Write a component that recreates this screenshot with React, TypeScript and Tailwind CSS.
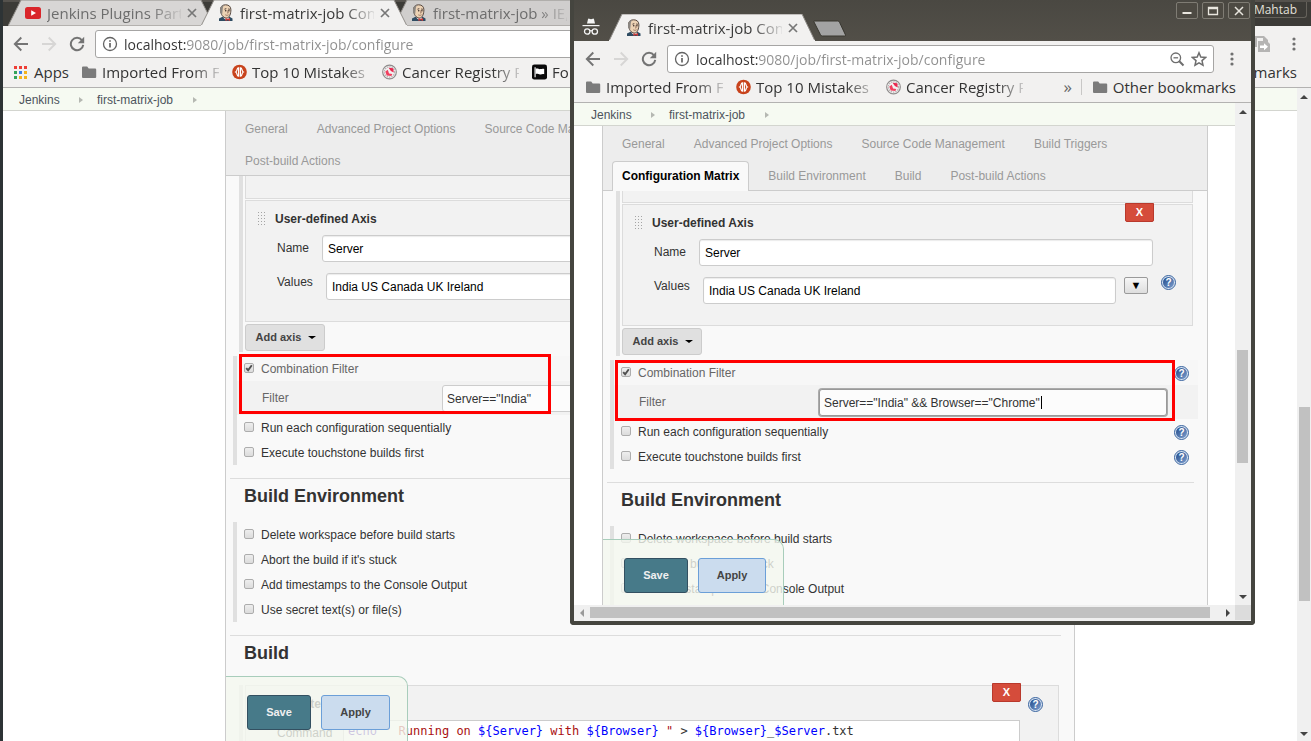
import React, { useId } from "react";

type IconProps = { className?: string };

function Butler() {
  return (
    <svg viewBox="0 0 16 18" className="h-[18px] w-4 shrink-0" aria-hidden="true">
      <path d="M1 17v-2.500l3.500-1.700h7l3 1.700V17z" fill="#2f4c62" />
      <path d="M5 12h5l1 2.500-2.500 1.500L6 14.500z" fill="#f4f1ee" />
      <path d="M2.500 6C2.300 2.500 4.500.8 7.700.8s5.200 1.900 5.200 5c0 3.800-1.400 8.200-4.400 8.200C5 14 2.800 10.500 2.500 6z" fill="#ecd2b4" stroke="#54463f" strokeWidth="1" />
      <path d="M2.300 9C1.300 4.500 2.800 1 6.500.8 4.800 2.200 4.800 4 4.600 6.500L4.200 10z" fill="#8b8681" />
      <path d="M6.500 5.200l1.800-.5M10.200 5l1.600.3" stroke="#4c3b34" strokeWidth="1" />
      <circle cx="7.700" cy="6.700" r=".8" fill="#3a2d28" />
      <circle cx="10.900" cy="6.700" r=".8" fill="#3a2d28" />
      <path d="M9.600 6.500l.6 2.300-1.200.2M7.300 10.800c1.100.7 2.200.7 3.300 0" stroke="#8b6754" strokeWidth=".8" fill="none" />
      <path d="M7.500 14l2.300 1.100L12 14v3l-2.200-1L7.500 17z" fill="#cf3a38" />
    </svg>
  );
}

function YouTube() {
  return (
    <svg viewBox="0 0 16 12" className="h-3 w-4 shrink-0" aria-hidden="true">
      <rect width="16" height="12" rx="2.500" fill="#d9252a" />
      <path d="M6.200 3.200v5.600L11 6z" fill="#fff" />
    </svg>
  );
}

function Folder() {
  return (
    <svg viewBox="0 0 15 13" className="h-[13px] w-[15px] shrink-0" aria-hidden="true">
      <path d="M0 1.500Q0 .5 1 .5h4.200L6.700 2.500H13.200q1 0 1 1V11q0 1-1 1H1q-1 0-1-1z" fill="#7b7b7b" />
    </svg>
  );
}

function AppsGrid() {
  const colors = ["#ee3e36", "#ee3e36", "#ee3e36", "#34a25a", "#3a7fe8", "#f4b31c", "#34a25a", "#f4b31c", "#f4b31c"];
  return (
    <svg viewBox="0 0 13 13" className="h-[13px] w-[13px] shrink-0" aria-hidden="true">
      {colors.map((c, i) => (
        <rect key={i} x={(i % 3) * 5} y={Math.floor(i / 3) * 5} width="3" height="3" fill={c} />
      ))}
    </svg>
  );
}

function Braces() {
  return (
    <svg viewBox="0 0 16 16" className="h-4 w-[15px] shrink-0" aria-hidden="true">
      <circle cx="8" cy="8" r="7.800" fill="#c8431c" />
      <path d="M7 3.600C4.800 3.400 6 7 4 8c2 1 .8 4.600 3 4.400zM9 3.600c2.200-.2 1 3.400 3 4.400-2 1-.8 4.600-3 4.400z" stroke="#fff" strokeWidth="1.300" fill="none" />
    </svg>
  );
}

function Registry() {
  return (
    <svg viewBox="0 0 16 16" className="h-4 w-[15px] shrink-0" aria-hidden="true">
      <circle cx="8" cy="8" r="7.300" fill="#f3f1f1" stroke="#8e8b8b" strokeWidth="1.200" />
      <circle cx="8" cy="8" r="5.500" fill="none" stroke="#b9b4b4" strokeWidth="1.400" strokeDasharray="1.500 1" />
      <path d="M7 3.500l5 .5.5 4.500L9.500 7z" fill="#e9274e" />
      <path d="M3.500 7.500L6.200 5.500l1.300 4L11 10l-1 2.200-5-.5z" fill="#f0405f" />
    </svg>
  );
}

function Flag() {
  return (
    <svg viewBox="0 0 16 16" className="h-4 w-[15px] shrink-0" aria-hidden="true">
      <rect width="16" height="16" rx="2.500" fill="#0a0a0a" />
      <path d="M3.300 3v10.500" stroke="#fff" strokeWidth="1.200" />
      <path d="M4 4.500c2-1 3.200.8 5 .4 1.500-.3 2.500-.8 4-.2v5.600c-1.500-.6-2.600 0-4 .3-1.800.3-3-1.300-5-.4z" fill="#fff" />
    </svg>
  );
}

function Incognito() {
  return (
    <svg viewBox="0 0 18 18" className="h-[18px] w-[18px]" aria-hidden="true">
      <path d="M5 5.500L6 1.200Q6.300.4 7.200.7L9 1.200l1.800-.5q.9-.3 1.200.5l1 4.300z" fill="#f4f4f4" />
      <path d="M.5 7h17v1.200H.5z" fill="#f4f4f4" />
      <circle cx="5.200" cy="13.500" r="2.700" fill="none" stroke="#f4f4f4" strokeWidth="1.300" />
      <circle cx="12.800" cy="13.500" r="2.700" fill="none" stroke="#f4f4f4" strokeWidth="1.300" />
      <path d="M7.800 13q1.200-.8 2.400 0" fill="none" stroke="#f4f4f4" strokeWidth="1.100" />
    </svg>
  );
}

function Arrow({ className = "" }: IconProps) {
  return (
    <svg viewBox="0 0 16 16" className={"h-4 w-4 " + className} fill="none" stroke="currentColor" strokeWidth="1.900" aria-hidden="true">
      <path d="M15 8H2M8.300 1.500L1.800 8l6.500 6.500" />
    </svg>
  );
}

function Reload() {
  return (
    <svg viewBox="0 0 16 16" className="h-4 w-4" fill="none" stroke="#747474" strokeWidth="2" aria-hidden="true">
      <path d="M13 4.300A6.200 6.200 0 1 0 14.200 8.800" />
      <path d="M15.200.8v6.400H8.800z" fill="#747474" stroke="none" />
    </svg>
  );
}

function Dots() {
  return (
    <svg viewBox="0 0 16 16" className="h-4 w-4" fill="#707070" aria-hidden="true">
      <circle cx="8" cy="3" r="1.600" />
      <circle cx="8" cy="8" r="1.600" />
      <circle cx="8" cy="13" r="1.600" />
    </svg>
  );
}

const UI = "font-['Open_Sans','Noto_Sans',sans-serif]";

function Tab({ title, active, icon, fill }: { title: string; active?: boolean; icon: React.ReactNode; fill: string }) {
  return (
    <div className={"relative -mr-[13px] flex h-full w-[206px] shrink-0 items-center gap-[6px] pl-[17px] " + (active ? "z-10" : "")}>
      <svg viewBox="0 0 206 27" preserveAspectRatio="none" className="absolute inset-0 h-full w-full" aria-hidden="true">
        <path d="M0 27L13 0H193L206 27z" fill={fill} stroke="#8f8c88" strokeWidth="1" />
        {active && <path d="M0 27h206" stroke={fill} strokeWidth="2" />}
      </svg>
      <div className="relative flex">{icon}</div>
      <span className={"relative w-[134px] overflow-hidden whitespace-nowrap text-[15px] leading-5 [mask-image:linear-gradient(90deg,#000_104px,transparent_138px)] " + (active ? "text-[#3b3b3b]" : "text-[#6d6d6d]")}>
        {title}
      </span>
      <button aria-label="Close tab" className="relative">
        <svg viewBox="0 0 10 10" className="h-[10px] w-[10px]" stroke="#777" strokeWidth="1.700" aria-hidden="true">
          <path d="M1 1l8 8M9 1L1 9" />
        </svg>
      </button>
    </div>
  );
}

function Toolbar({ front }: { front?: boolean }) {
  return (
    <div className={"flex h-9 items-center bg-[#f2f1f0] " + (front ? "pl-[11px] pr-[11px]" : "pl-[10px] pr-[9px]")}>
      <div className="flex shrink-0 items-center gap-3">
        <button aria-label="Back"><Arrow className="text-[#747474]" /></button>
        <button aria-label="Forward"><Arrow className="rotate-180 text-[#d7d6d5]" /></button>
        <button aria-label="Reload"><Reload /></button>
      </div>
      <div className="ml-[10px] flex h-7 min-w-0 flex-1 items-center rounded-[3px] border border-[#a6a5a4] bg-white pl-[6px] pr-[6px]">
        <svg viewBox="0 0 16 16" className="h-4 w-4 shrink-0" fill="none" stroke="#636363" strokeWidth="1.300" aria-label="Site information">
          <circle cx="8" cy="8" r="6.500" />
          <path d="M8 7v4.500M8 4.200v1.600" strokeWidth="1.700" />
        </svg>
        <input
          aria-label="Address"
          defaultValue="localhost:9080/job/first-matrix-job/configure"
          className="ml-[6px] h-6 min-w-0 flex-1 bg-[linear-gradient(90deg,#333_62px,#8f8f8f_62px)] bg-clip-text text-[14px] text-transparent outline-none"
        />
        {front && (
          <div className="flex items-center gap-[6px]">
            <button aria-label="Zoom">
              <svg viewBox="0 0 16 16" className="h-4 w-4" fill="none" stroke="#6e6e6e" strokeWidth="1.300" aria-hidden="true">
                <circle cx="6.800" cy="6.800" r="4.800" />
                <path d="M4.500 6.800h4.600" />
                <path d="M10.300 10.300l4.200 4.200" strokeWidth="2" />
              </svg>
            </button>
            <button aria-label="Bookmark this page">
              <svg viewBox="0 0 16 16" className="h-4 w-4" fill="none" stroke="#6e6e6e" strokeWidth="1.500" aria-hidden="true">
                <path d="M8 1.800l1.800 4.300 4.700.4-3.500 3.100 1 4.600L8 11.800l-4 2.400 1-4.600L1.500 6.500l4.700-.4z" />
              </svg>
            </button>
          </div>
        )}
      </div>
      {!front && (
        <button aria-label="Extension" className="ml-[10px]">
          <svg viewBox="0 0 16 16" className="h-4 w-4" aria-hidden="true">
            <path d="M1 0h9l4 4v3h-2V5H9V2H3v9H1z" fill="#b5b4b3" />
            <path d="M4 5h9l3 3v8H4z" fill="#b5b4b3" />
            <path d="M6 9.500h4V7.300l4 3.500-4 3.500V12H6z" fill="#fff" />
          </svg>
        </button>
      )}
      <button aria-label="Menu" className={front ? "ml-[10px]" : "ml-4"}><Dots /></button>
    </div>
  );
}

function Bookmark({ icon, label }: { icon: React.ReactNode; label: string }) {
  return (
    <a href="#" className="flex shrink-0 items-center gap-[5px]">
      {icon}
      <span className="w-[117px] overflow-hidden whitespace-nowrap [mask-image:linear-gradient(90deg,#000_90px,transparent_124px)]">{label}</span>
    </a>
  );
}

function Bookmarks({ front }: { front?: boolean }) {
  return (
    <nav className={"flex h-[26px] items-center justify-between border-b border-[#b3b2b1] bg-[#f2f1f0] pb-[5px] text-[15px] leading-5 text-[#333] " + (front ? "pl-3 pr-[15px]" : "pl-[11px] pr-[14px]")}>
      <div className="flex items-center gap-[13px]">
        {!front && (
          <a href="#" className="flex items-center gap-[7px]"><AppsGrid />Apps</a>
        )}
        <Bookmark icon={<Folder />} label="Imported From Firefox" />
        <Bookmark icon={<Braces />} label="Top 10 Mistakes New" />
        <Bookmark icon={<Registry />} label="Cancer Registry Portal" />
        {!front && <Bookmark icon={<Flag />} label="Forms" />}
      </div>
      <div className="flex shrink-0 items-center">
        {front && (
          <>
            <button aria-label="More bookmarks" className="text-[17px] text-[#666]">»</button>
            <span className="ml-[9px] mr-[11px] h-4 w-px bg-[#c8c7c6]" />
          </>
        )}
        <a href="#" className="flex items-center gap-[5px]"><Folder />Other bookmarks</a>
      </div>
    </nav>
  );
}

function Breadcrumbs({ front }: { front?: boolean }) {
  const sep = <span className="h-0 w-0 border-y-[3px] border-l-4 border-y-transparent border-l-[#b5b8b2]" />;
  return (
    <nav className={"flex h-[23px] items-center border-b border-[#d3d5cf] bg-[#f6faf2] pt-px text-[12px] text-[#4d545d] " + (front ? "pl-[17px]" : "pl-4")}>
      <a href="#" className="w-[60px]">Jenkins</a>
      {sep}
      <a href="#" className="ml-[14px] w-24">first-matrix-job</a>
      {sep}
    </nav>
  );
}

function Help() {
  return (
    <button aria-label="Help" className="flex h-[15px] w-[15px] shrink-0 items-center justify-center rounded-full border border-[#3a649f] bg-[#d5e2f1] p-px">
      <span className="flex h-[11px] w-[11px] items-center justify-center rounded-full bg-linear-to-br from-[#1f4a8a] to-[#7f9fce] text-[10px] font-bold leading-[11px] text-white">?</span>
    </button>
  );
}

function CheckRow({ label, help, checked }: { label: string; help?: boolean; checked?: boolean }) {
  const id = useId();
  return (
    <div className={"flex h-[25px] items-start pl-[7px] pr-[9px] " + (checked ? "bg-[#f7f7f7] text-[#666]" : "text-[#333]")}>
      <span className="relative mt-[7px] flex h-[10px] w-[10px]">
        <input id={id} type="checkbox" defaultChecked={checked} className="h-[10px] w-[10px] appearance-none rounded-[2px] border border-[#adadad] bg-linear-to-b from-[#eee] to-[#dcdcdc]" />
        {checked && (
          <svg viewBox="0 0 10 10" className="pointer-events-none absolute inset-0" fill="none" stroke="#4f4f4f" strokeWidth="1.900" aria-hidden="true">
            <path d="M2.200 5.200l1.900 2L7.800 2.200" />
          </svg>
        )}
      </span>
      <label htmlFor={id} className="ml-[7px] flex-1 pt-[6px]">{label}</label>
      {help && <div className="pt-[6px]"><Help /></div>}
    </div>
  );
}

function Grip() {
  return <span className="h-4 w-[10px] bg-[radial-gradient(#a5a5a5_1px,transparent_1px)] bg-[size:3px_3px]" />;
}

function DeleteButton({ className }: { className: string }) {
  return (
    <button aria-label="Delete" className={"absolute h-[19px] w-[29px] rounded-b-[2px] border border-[#b9392c] bg-[#d54c3b] text-[11px] font-bold leading-[17px] text-white " + className}>
      X
    </button>
  );
}

const FIELD = "h-[27px] min-w-0 rounded-[3px] border border-[#ccc] bg-white pl-[5px] text-[12px] text-black shadow-[inset_0_1px_1px_rgba(0,0,0,0.08)] outline-none";

function ConfigTabs({ active }: { active?: string }) {
  const tabs = ["General", "Advanced Project Options", "Source Code Management", "Build Triggers", "Configuration Matrix", "Build Environment", "Build", "Post-build Actions"];
  return (
    <div role="tablist" className="flex shrink-0 flex-wrap gap-x-[9px] gap-y-[2px] border-b border-[#ccc] bg-[#ededed] pl-[9px] pt-[2px]">
      {tabs.map((t) =>
        t === active ? (
          <button key={t} role="tab" aria-selected className="-mb-px mt-px h-[30px] rounded-t-[4px] border border-b-0 border-[#ccc] bg-[#f9f9f9] px-[9px] font-bold text-black">{t}</button>
        ) : (
          <button key={t} role="tab" className="h-[30px] px-[10px] pt-[2px] text-[#999]">{t}</button>
        )
      )}
    </div>
  );
}

function SectionTitle({ children }: { children: React.ReactNode }) {
  return <h2 className="ml-[4px] mr-[13px] mt-[13px] border-t border-[#ddd] pl-[14px] pt-[5px] text-[18px] font-bold leading-6 text-[#333]">{children}</h2>;
}

function MatrixForm({ front }: { front?: boolean }) {
  const id = useId();
  return (
    <div className="relative mx-auto flex w-full flex-1 flex-col overflow-hidden border-x border-[#ccc] bg-[#f9f9f9] text-[12px] leading-[15px] text-[#333]">
      <ConfigTabs active={front ? "Configuration Matrix" : undefined} />

      <section className="ml-[13px] mr-[14px] shrink-0 border-l-4 border-[#e0e0e0] pb-px pl-[2px]">
        <div className={"mb-px border border-t-0 border-[#dcdcdc] bg-[#f2f2f2] " + (front ? "h-3" : "h-[23px]")} />
        <div className="relative h-[122px] border border-[#dcdcdc] bg-[#f2f2f2] pl-[11px] pt-[10px]">
          <DeleteButton className="-top-[2px] right-[38px]" />
          <div className="flex h-4 items-center gap-[8px] font-bold"><Grip />User-defined Axis</div>
          <div className="mt-[8px] flex pl-[20px]">
            <label htmlFor={id + "name"} className="w-[45px] pt-[6px]">Name</label>
            <input id={id + "name"} defaultValue="Server" className={FIELD + " mr-[39px] flex-1"} />
          </div>
          <div className="mt-[11px] flex pl-[20px]">
            <label htmlFor={id + "values"} className="w-[49px] pt-[2px]">Values</label>
            <input id={id + "values"} defaultValue="India US Canada UK Ireland" className={FIELD + " flex-1"} />
            <button aria-label="Expand" className="ml-[8px] flex h-[17px] w-6 items-center justify-center rounded-[2px] border border-[#9a9a9a] bg-linear-to-b from-[#f6f6f6] to-[#dedede] text-[11px] text-black">▼</button>
            <div className="-mt-[2px] ml-[13px] mr-[16px]"><Help /></div>
          </div>
        </div>
        <button className="mt-[2px] flex h-[27px] w-20 items-center justify-center gap-[7px] rounded-[3px] border border-[#ccc] bg-[#e0e0e0] pl-[2px] text-[11px] font-bold text-[#444]">
          Add axis
          <span className="h-0 w-0 border-x-4 border-t-[3px] border-x-transparent border-t-black" />
        </button>
      </section>

      <section className="relative ml-[7px] mr-[9px] mt-1 shrink-0 border-l-4 border-[#e0e0e0]">
        <CheckRow label="Combination Filter" checked help />
        <div className="relative flex h-[34px] items-start bg-[#f2f2f2] pl-[25px] pr-[31px] pt-1 text-[#666]">
          <label htmlFor={id + "filter"} className="w-[180px] pt-[6px]">Filter</label>
          <input
            id={id + "filter"}
            defaultValue={front ? 'Server=="India" && Browser=="Chrome"' : 'Server=="India"'}
            className={"h-[27px] min-w-0 flex-1 rounded-[3px] border bg-[#fcfcfc] pl-[4px] text-[12px] text-[#333] outline-none " + (front ? "border-[#999] shadow-[0_0_0_1px_#aaa]" : "border-[#ccc]")}
          />
          {front && <span className="absolute left-[427px] top-[11px] h-[13px] w-px bg-black" />}
        </div>
        <CheckRow label="Run each configuration sequentially" help />
        <CheckRow label="Execute touchstone builds first" help />
        <div className={"pointer-events-none absolute border-[3px] border-[#ff0000] " + (front ? "left-[1px] right-[23px] top-0 h-[61px]" : "-top-[2px] left-[2px] h-[60px] w-[312px]")} />
      </section>

      <SectionTitle>Build Environment</SectionTitle>
      <section className="ml-[7px] mr-[9px] mt-[14px] shrink-0 border-l-4 border-[#e0e0e0]">
        <CheckRow label="Delete workspace before build starts" />
        <CheckRow label="Abort the build if it's stuck" />
        <CheckRow label="Add timestamps to the Console Output" />
        <CheckRow label="Use secret text(s) or file(s)" />
      </section>

      {!front && (
        <>
          <SectionTitle>Build</SectionTitle>
          <section className="ml-[13px] mr-[15px] mt-[20px] shrink-0 border-l-4 border-[#e0e0e0] pl-[2px]">
            <div className="relative h-[122px] border border-[#dcdcdc] bg-[#f2f2f2] pl-[11px] pt-[10px]">
              <DeleteButton className="-top-[3px] right-[37px]" />
              <div className="flex h-4 items-center gap-[8px] font-bold">
                <Grip />
                <span className="flex-1">Execute shell</span>
                <div className="mr-[15px]"><Help /></div>
              </div>
              <div className="mt-[8px] flex pl-[20px]">
                <span className="w-[66px] pt-[6px]">Command</span>
                <pre className="mr-[38px] h-20 flex-1 border border-[#ccc] bg-white pl-[4px] pt-[3px] font-['DejaVu_Sans_Mono',monospace] text-[12px] leading-[14px] text-[#333]">
                  <code className="font-['DejaVu_Sans_Mono',monospace]">
                    <span className="text-[#3300aa]">echo</span>{" "}
                    <span className="text-[#aa1111]">{'" Running on '}</span>
                    <span className="text-[#0000ff]">{"${Server}"}</span>
                    <span className="text-[#aa1111]">{" with "}</span>
                    <span className="text-[#0000ff]">{"${Browser}"}</span>
                    <span className="text-[#aa1111]">{' "'}</span>
                    {" > "}
                    <span className="text-[#0000ff]">{"${Browser}"}</span>
                    {"_"}
                    <span className="text-[#0000ff]">$Server</span>
                    {".txt"}
                  </code>
                </pre>
              </div>
            </div>
          </section>
        </>
      )}

      <div className={"absolute bottom-0 left-0 flex gap-[10px] rounded-tr-[10px] border border-b-0 border-l-0 border-[#a8cdbb] bg-[#f4f8ef]/80 pl-[21px] pt-[18px] text-[11px] font-bold " + (front ? "pb-3 pr-[17px]" : "pb-[11px] pr-[17px]")}>
        <button className="h-[35px] w-16 rounded-[3px] border border-[#335061] bg-[#477a89] text-[#f0f0f0]">Save</button>
        <button className={"h-[35px] rounded-[3px] border border-[#6b9fd8] bg-[#cbdcee] text-[#444] " + (front ? "w-[68px]" : "w-[69px]")}>Apply</button>
      </div>
    </div>
  );
}

function VScroll({ front }: { front?: boolean }) {
  return (
    <div className={"flex shrink-0 flex-col items-center bg-[#f0f0f0] " + (front ? "w-4 pr-px" : "w-[14px]")}>
      <span className="mt-[7px] h-0 w-0 border-x-4 border-b-4 border-x-transparent border-b-[#444]" />
      <span className={front ? "basis-0 grow-[236]" : "basis-0 grow-[308]"} />
      <span className={"w-[11px] basis-0 bg-[#c1c1c1] " + (front ? "grow-[113]" : "grow-[194]")} />
      <span className={front ? "basis-0 grow-[132]" : "basis-0 grow-[131]"} />
      <span className={"h-0 w-0 border-x-4 border-t-4 border-x-transparent border-t-[#444] " + (front ? "mb-[6px]" : "mb-[5px]")} />
    </div>
  );
}

function BackWindow() {
  return (
    <div className="flex h-full min-w-0 flex-1 flex-col overflow-hidden">
      <div className={UI + " shrink-0"}>
        <div className="flex h-[26px] justify-between border-t-2 border-[#55524d] bg-[#3c3b37]">
          <div className="-mt-[2px] flex pl-[5px]">
            <Tab title="Jenkins Plugins Part 2" icon={<YouTube />} fill="#d8d6d5" />
            <Tab title="first-matrix-job Config" icon={<Butler />} active fill="#f2f1f0" />
            <Tab title="first-matrix-job » IE, Linux" icon={<Butler />} fill="#d0cecd" />
          </div>
          <button className="mr-1 h-4 w-20 rounded-b-[3px] border border-t-0 border-[#65625b] pr-[9px] text-right text-[12px] leading-[15px] text-[#e3e0da]">Mahtab</button>
        </div>
        <Toolbar />
        <Bookmarks />
      </div>
      <div className="flex min-h-0 flex-1">
        <div className="flex min-w-0 flex-1 flex-col bg-white">
          <Breadcrumbs />
          <div className="flex min-h-0 flex-1 px-[222px]"><MatrixForm /></div>
        </div>
        <VScroll />
      </div>
    </div>
  );
}

function WindowButton({ label, children }: { label: string; children: React.ReactNode }) {
  return (
    <button aria-label={label} className="flex h-[17px] w-[22px] items-center justify-center rounded-[2px] border border-[#7f7c74] bg-[#4d4a43]">
      <svg viewBox="0 0 12 12" className="h-3 w-3" fill="none" stroke="#e9e6df" strokeWidth="1.600" aria-hidden="true">{children}</svg>
    </button>
  );
}

function FrontWindow() {
  return (
    <div className="absolute left-[570px] top-0 flex h-[625px] w-[685px] flex-col overflow-hidden rounded-b-[4px] border-x-4 border-b-4 border-[#45453f] bg-[#f0f0f0]">
      <div className={UI + " shrink-0"}>
        <div className="flex h-[41px] justify-between bg-linear-to-b from-[#4a4842] to-[#524f48]">
          <div className="flex pt-[14px]">
            <div className="ml-[8px] mr-[9px] mt-[4px] w-[18px]"><Incognito /></div>
            <Tab title="first-matrix-job Config" icon={<Butler />} active fill="#f2f1f0" />
            <button aria-label="New tab" className="ml-[11px] mt-[6px] h-[17px]">
              <svg viewBox="0 0 34 17" className="h-[17px] w-[34px]" aria-hidden="true">
                <path d="M1.500 1h23q1.500 0 2 1.200L32.500 15q.4 1-1 1H9.500q-1.500 0-2-1.200L1 2Q.6 1 1.500 1z" fill="#a3a3a3" stroke="#38362f" strokeWidth="1" />
              </svg>
            </button>
          </div>
          <div className="flex gap-1 pr-px pt-[2px]">
            <WindowButton label="Minimize"><path d="M1.500 8h9" strokeWidth="2" /></WindowButton>
            <WindowButton label="Maximize"><path d="M1.500 2.500h9v7h-9zM1.500 3.500h9" strokeWidth="1.300" /></WindowButton>
            <WindowButton label="Close"><path d="M2 2l8 8M10 2l-8 8" strokeWidth="1.500" /></WindowButton>
          </div>
        </div>
        <Toolbar front />
        <Bookmarks front />
      </div>
      <div className="flex min-h-0 flex-1">
        <div className="flex min-w-0 flex-1 flex-col bg-white">
          <Breadcrumbs front />
          <div className="flex min-h-0 flex-1 pl-7 pr-[27px]"><MatrixForm front /></div>
        </div>
        <VScroll front />
      </div>
      <div className="mb-px flex h-[15px] shrink-0">
        <div className="flex flex-1 items-center bg-[#f0f0f0]">
          <span className="ml-[6px] h-0 w-0 border-y-4 border-r-4 border-y-transparent border-r-[#999]" />
          <span className="ml-[6px] mr-4 h-[11px] flex-1 bg-[#c1c1c1]" />
          <span className="mr-[5px] h-0 w-0 border-y-4 border-l-4 border-y-transparent border-l-[#444]" />
        </div>
        <span className="w-4 bg-[#dcdcdc]" />
      </div>
    </div>
  );
}

export default function App() {
  return (
    <main className="relative flex h-screen overflow-hidden bg-white font-['Liberation_Sans',Arial,sans-serif]">
      <div className="flex w-[3px] shrink-0 items-center bg-[#2d3335]" />
      <BackWindow />
      <FrontWindow />
    </main>
  );
}
